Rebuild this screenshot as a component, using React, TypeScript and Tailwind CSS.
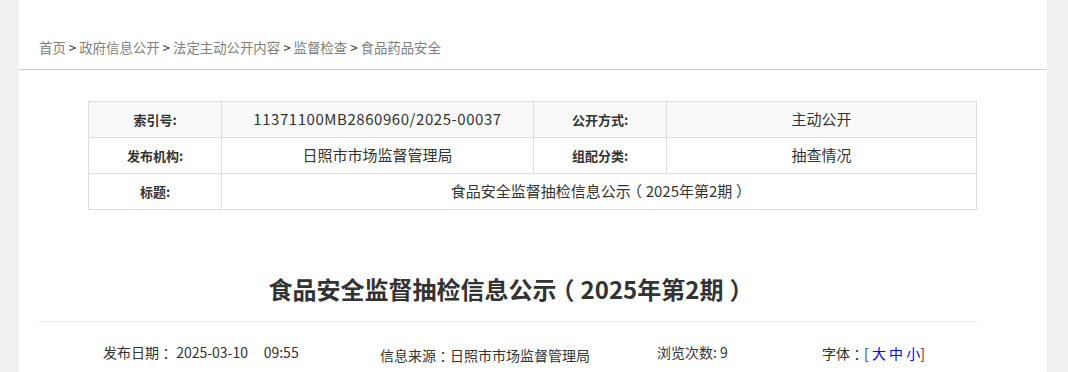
const font = { fontFamily: '"Noto Sans CJK SC", "Noto Sans", sans-serif' };

const crumbs = ["首页", "政府信息公开", "法定主动公开内容", "监督检查", "食品药品安全"];

// full-width punctuation: use the half-width glyph and pad it so it sits centred in a full em
const Punct = ({ ch }: { ch: string }) => (
  <span className="inline-block px-[0.25em] [font-feature-settings:'halt']">{ch}</span>
);

const Breadcrumb = () => (
  <div className="h-[70px] border-b border-[#cccccc] px-5 pt-[36px]">
    <div className="flex items-center text-[13.4px] leading-[22px] text-[#808080]">
      {crumbs.map((c, i) => (
        <span key={c} className="flex items-center">
          {i > 0 && <span className="px-[3px] text-[#333333]">&gt;</span>}
          <a href="#" className="text-[#808080]">{c}</a>
        </span>
      ))}
    </div>
  </div>
);

const Label = ({ children }: { children: React.ReactNode }) => (
  <td className="w-[133px] border border-[#dddddd] text-center text-[13px] font-bold text-[#333333]">{children}</td>
);

const Value = ({ children, colSpan }: { children: React.ReactNode; colSpan?: number }) => (
  <td colSpan={colSpan} className="border border-[#dddddd] text-center text-[15px] text-[#333333]">{children}</td>
);

const InfoTable = () => (
  <table className="ml-[69px] mt-[31px] w-[889px] border-collapse">
    <tbody>
      <tr className="h-[36px] bg-[#f9f9f9]">
        <Label>索引号:</Label>
        <td className="w-[312px] border border-[#dddddd] text-center text-[15px] tracking-[0.55px] text-[#333333]">11371100MB2860960/2025-00037</td>
        <Label>公开方式:</Label>
        <Value>主动公开</Value>
      </tr>
      <tr className="h-[36px]">
        <Label>发布机构:</Label>
        <Value>日照市市场监督管理局</Value>
        <Label>组配分类:</Label>
        <Value>抽查情况</Value>
      </tr>
      <tr className="h-[36px]">
        <Label>标题:</Label>
        <Value colSpan={3}>
          食品安全监督抽检信息公示<Punct ch="（" />2025年第2期<Punct ch="）" />
        </Value>
      </tr>
    </tbody>
  </table>
);

const Meta = () => (
  <div className="flex pl-[64px] text-[14px] leading-[20px] text-[#333333]">
    <div className="w-[277px] pt-[2px]">
      发布日期<Punct ch="：" />&nbsp;2025-03-10&nbsp;&nbsp;&nbsp;&nbsp;&nbsp;09:55
    </div>
    <div className="w-[277px] pt-[5px]">
      信息来源<Punct ch="：" />日照市市场监督管理局
    </div>
    <div className="w-[165px] pt-[2px]">浏览次数: 9</div>
    <div className="pt-[3px]">
      字体<Punct ch="：" />[ <a href="#" className="text-[#0000ff]">大</a>&nbsp;<a href="#" className="text-[#0000ff]">中</a>&nbsp;
      <a href="#" className="text-[#0000ff]">小</a>]
    </div>
  </div>
);

export default function App() {
  return (
    <div className="h-[372px] overflow-hidden bg-[#f1f1f1]" style={font}>
      <div className="ml-[19px] h-full w-[1028px] bg-white">
        <Breadcrumb />
        <InfoTable />
        <div className="mx-5 mt-[61px] w-[938px]">
          <h1 className="border-b border-[#eeeeee] pb-[14px] text-center text-[24px] font-bold leading-[36px] text-[#333333]">
            食品安全监督抽检信息公示<Punct ch="（" />2025年第2期<Punct ch="）" />
          </h1>
          <div className="pt-[18px]">
            <Meta />
          </div>
        </div>
      </div>
    </div>
  );
}
